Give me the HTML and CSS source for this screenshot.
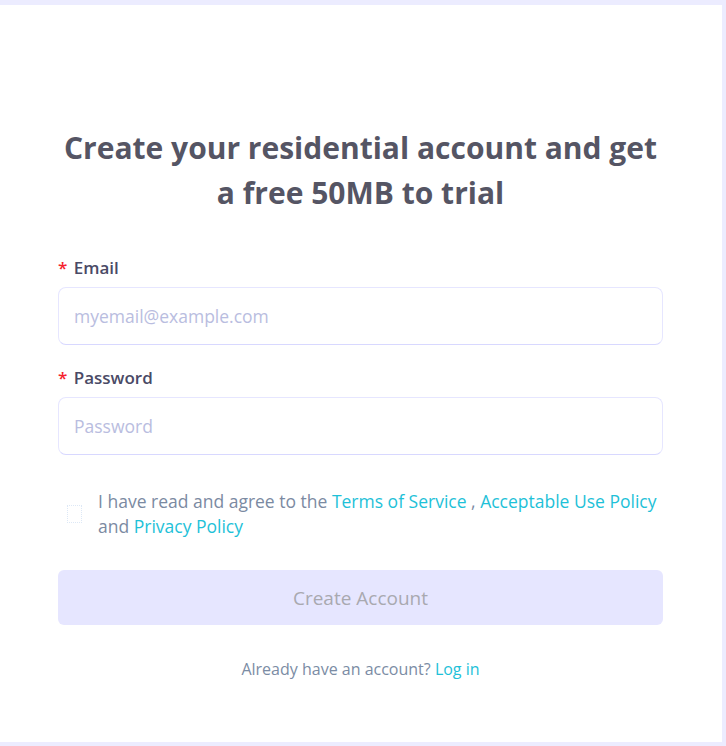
FILE: index.html
```html
<!DOCTYPE html>
<html lang="en">
<head>
<meta charset="utf-8">
<title>Create Account</title>
<link rel="stylesheet" href="styles.css">
</head>
<body>
<div class="card">
  <div class="content">
    <h1 class="title">Create your residential account and get a free 50MB to trial</h1>
    <form class="form">
      <div class="field">
        <label class="label"><span class="req">*</span> Email</label>
        <input class="input" type="text" placeholder="myemail@example.com">
      </div>
      <div class="field">
        <label class="label"><span class="req">*</span> Password</label>
        <input class="input" type="password" placeholder="Password">
      </div>
      <div class="agree">
        <span class="check"></span>
        <p class="agree-text">I have read and agree to the <a class="link" href="#">Terms of Service</a> , <a class="link" href="#">Acceptable Use Policy</a> and <a class="link" href="#">Privacy Policy</a></p>
      </div>
      <button class="btn" type="button">Create Account</button>
      <p class="footer">Already have an account? <a class="link" href="#">Log in</a></p>
    </form>
  </div>
</div>
</body>
</html>
```

FILE: styles.css
```css
html, body {
  margin: 0;
  padding: 0;
}
body {
  background: #ececff;
  font-family: "Open Sans", "Noto Sans", sans-serif;
  height: 746px;
  overflow: hidden;
}
.card {
  margin-top: 5px;
  width: 722px;
  height: 737px;
  background: #ffffff;
  box-sizing: border-box;
  padding-top: 120px;
}
.content {
  margin-left: 58px;
  width: 605px;
}
.title {
  margin: 0;
  font-size: 30px;
  font-weight: 700;
  line-height: 45px;
  color: #555564;
  text-align: center;
}
.form {
  margin-top: 41px;
  display: flex;
  flex-direction: column;
}
.field {
  display: flex;
  flex-direction: column;
  gap: 7px;
  margin-bottom: 21px;
}
.label {
  font-size: 17px;
  font-weight: 600;
  line-height: 24px;
  color: #4a4a66;
}
.req {
  color: #f5222d;
  margin-right: 2px;
}
.input {
  height: 58px;
  box-sizing: border-box;
  border: 1px solid #e6e6ff;
  border-bottom-color: #d8d8ff;
  border-radius: 8px;
  padding: 0 15px;
  font-family: inherit;
  font-size: 17.5px;
  color: #333;
  outline: none;
  background: #fff;
}
.input::placeholder {
  color: #b9bde0;
}
.agree {
  margin-top: 13px;
  display: flex;
  align-items: flex-start;
}
.check {
  flex: none;
  width: 13px;
  height: 16px;
  margin: 16px 16px 0 9px;
  border: 1px dotted #dde8f6;
}
.agree-text {
  margin: 0;
  font-size: 17.5px;
  line-height: 25px;
  color: #7b8aa2;
}
.link {
  color: #1ec1d8;
  text-decoration: none;
}
.btn {
  margin-top: 31px;
  height: 55px;
  border: none;
  border-radius: 6px;
  background: #e6e6ff;
  color: #a9a9b0;
  font-family: inherit;
  font-size: 19px;
  font-weight: 500;
}
.footer {
  margin: 32px 0 0;
  text-align: center;
  font-size: 16px;
  line-height: 24px;
  color: #7b8ca4;
}
```
